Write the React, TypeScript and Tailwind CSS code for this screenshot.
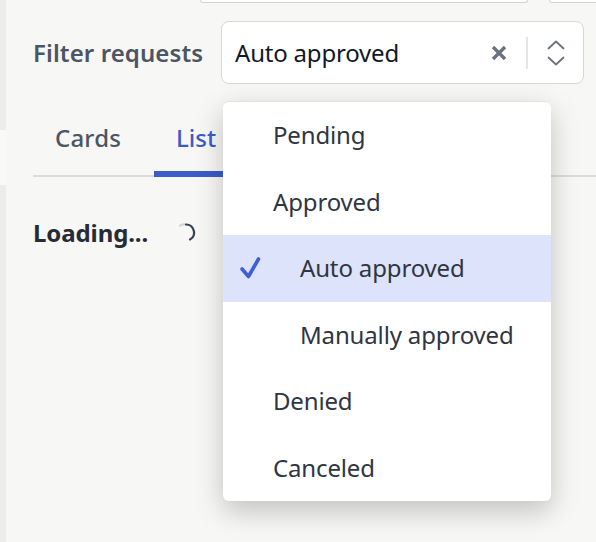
const options = [
  { label: 'Pending', nested: false, selected: false },
  { label: 'Approved', nested: false, selected: false },
  { label: 'Auto approved', nested: true, selected: true },
  { label: 'Manually approved', nested: true, selected: false },
  { label: 'Denied', nested: false, selected: false },
  { label: 'Canceled', nested: false, selected: false },
];

function ClearIcon() {
  return (
    <svg width="16" height="16" viewBox="0 0 16 16" fill="none" stroke="#6b7280" strokeWidth="3.4" strokeLinecap="butt">
      <path d="M2 2l12 12M14 2 2 14" />
    </svg>
  );
}

function CheckIcon() {
  return (
    <svg className="absolute left-[16px]" width="22" height="24" viewBox="0 0 22 24" fill="none" stroke="#3f5fd6" strokeWidth="3.6" strokeLinecap="round" strokeLinejoin="round">
      <path d="M3 13l6.5 7.5L19.5 3" />
    </svg>
  );
}

function Chevrons() {
  return (
    <svg width="18" height="26" viewBox="0 0 18 26" fill="none" stroke="#6b7280" strokeWidth="1.8" strokeLinecap="round" strokeLinejoin="round">
      <path d="M1.5 8.5 9 1.5l7.5 7" />
      <path d="M1.5 17.5 9 24.5l7.5-7" />
    </svg>
  );
}

function Spinner() {
  return (
    <svg width="20" height="20" viewBox="0 0 20 20" fill="none" strokeWidth="2.2" strokeLinecap="round">
      <path d="M4 2.6A8 8 0 0 1 10 1.5" stroke="#d1d5db" />
      <path d="M10 1.5a8 8 0 0 1 4 14.93" stroke="#374151" />
    </svg>
  );
}

export default function App() {
  return (
    <div className="flex h-[542px] w-[596px] overflow-hidden bg-[#f7f7f5] font-['Noto_Sans',sans-serif]">
      <div className="flex w-[6px] shrink-0 flex-col bg-[#ececea]">
        <div className="mt-[130px] h-[55px] bg-[#f9f9f7]" />
      </div>

      <div className="relative flex-1 pl-[27px]">
        <div className="flex h-[3px] gap-[21px] pl-[167px]">
          <div className="w-[328px] rounded-b-md border border-t-0 border-[#d4d4d2] bg-white" />
          <div className="w-[60px] rounded-b-md border border-t-0 border-[#d4d4d2] bg-white" />
        </div>

        <div className="mt-[18px] flex h-[63px] items-center">
          <span className="w-[188px] text-[24px] font-semibold tracking-[0.1px] text-[#4b5563]">Filter requests</span>
          <div className="flex h-[63px] w-[363px] items-center rounded-lg border border-[#d8d8d6] bg-white pl-[13px] pr-[18px]">
            <span className="flex-1 text-[24px] tracking-[-0.2px] text-[#111827]">Auto approved</span>
            <ClearIcon />
            <div className="mx-[19px] h-[32px] w-[2px] bg-[#e5e5e3]" />
            <Chevrons />
          </div>
        </div>

        <div className="mt-[33px] flex h-[60px] border-b-2 border-[#dcdcda]">
          <div className="w-[121px] pl-[22px] pt-[3px] text-[24px] font-medium tracking-[0.2px] text-[#4b5563]">Cards</div>
          <div className="-mb-[2px] w-[100px] rounded-tl-[3px] border-b-[6px] border-[#3b5bc9] pl-[22px] pt-[3px] text-[24px] font-medium text-[#3b5bc9]">List</div>
        </div>

        <div className="mt-[38px] flex items-center">
          <span className="w-[143px] text-[24px] font-bold tracking-[-0.1px] text-[#262b36]">Loading...</span>
          <Spinner />
        </div>

        <div className="absolute left-[217px] top-[101px] w-[328px] rounded-md border-t border-[#e2e2e0] bg-white shadow-[0_10px_28px_rgba(0,0,0,0.22)]">
          {options.map((option) => (
            <div
              key={option.label}
              className={`relative flex h-[66.5px] items-center text-[24px] tracking-[-0.15px] text-[#2f3542] ${
                option.nested ? 'pl-[77px]' : 'pl-[50px]'
              } ${option.selected ? 'bg-[#dce3fa]' : ''}`}
            >
              {option.selected && <CheckIcon />}
              {option.label}
            </div>
          ))}
        </div>
      </div>
    </div>
  );
}
